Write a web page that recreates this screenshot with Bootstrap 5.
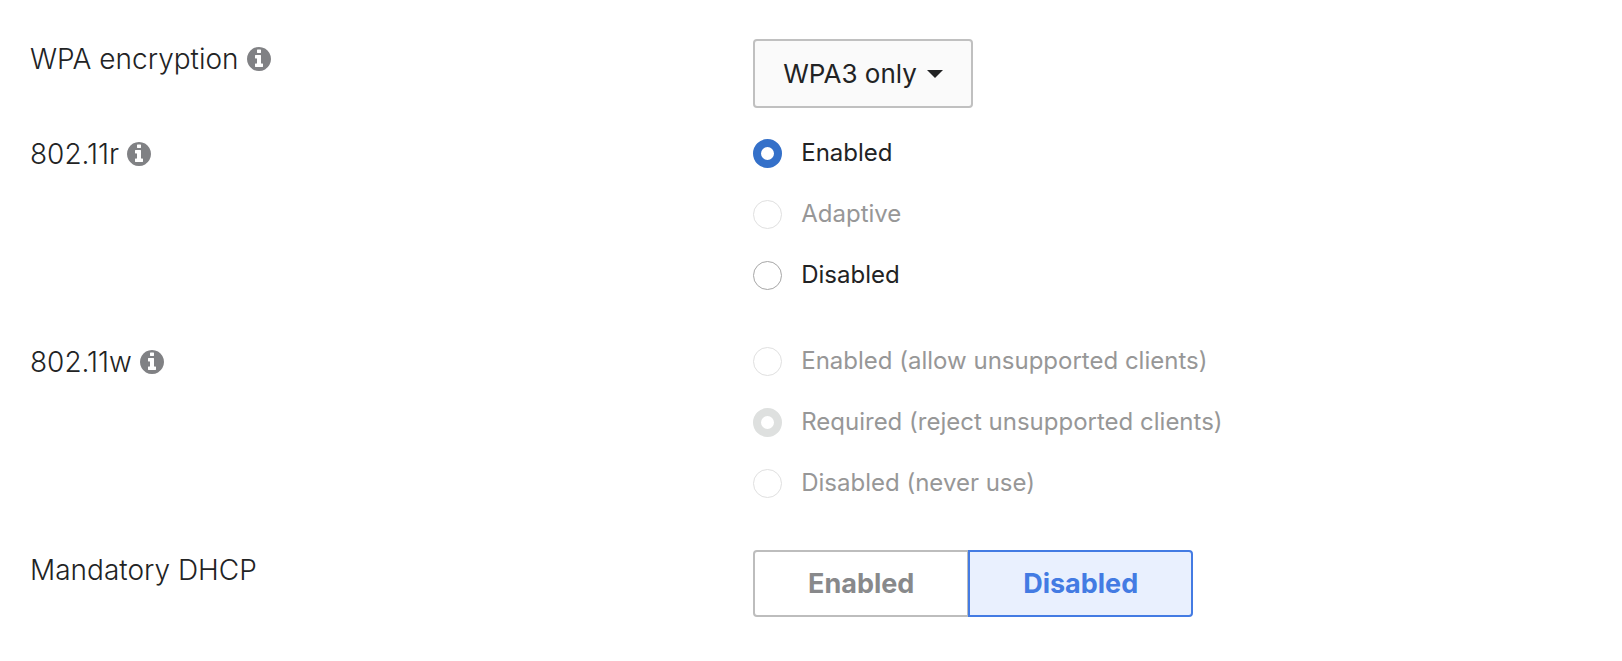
<!DOCTYPE html>
<html lang="en">
<head>
<meta charset="utf-8">
<meta name="viewport" content="width=device-width, initial-scale=1">
<title>Wireless settings</title>
<link href="https://cdn.jsdelivr.net/npm/bootstrap@5.3.0/dist/css/bootstrap.min.css" rel="stylesheet">
<style>
  body { font-family: Inter, "Liberation Sans", sans-serif; color: #222324; background: #fff; }
  .settings { padding: 39px 30px; }
  .setting { display: grid; grid-template-columns: 46.3% 1fr; margin-bottom: 48px; }
  .setting-tight { margin-bottom: 26px; }
  .setting-name { font-size: 28px; font-weight: 300; line-height: 40px; }
  .info { width: 24px; height: 24px; color: #808184; line-height: 1; }
  .info svg { display: block; width: 24px; height: 24px; fill: currentColor; }
  .picker {
    height: 69px; padding: 0 54px 0 28px; border: 2px solid #c0c0c0; border-radius: 4px;
    font-size: 26px; color: #222324; background-color: #fafafa;
    background-image: url("data:image/svg+xml,%3Csvg xmlns='http://www.w3.org/2000/svg' viewBox='0 0 16 8'%3E%3Cpath fill='%23222324' d='M0 0h16L8 8z'/%3E%3C/svg%3E");
    background-size: 16px 8px; background-position: right 28px center;
  }
  .options { gap: 23px; }
  .option { height: 38px; gap: 19px; font-size: 24px; line-height: 38px; }
  .option .form-check-input { width: 29px; height: 29px; margin: 0; border: 1px solid #a6a6a6; background-color: #fff; flex: none; }
  .option .form-check-input:checked { border: 8px solid #3470c9; background: #fff; }
  .option .form-check-input:disabled { opacity: 1; border-color: #e0e0e0; }
  .option .form-check-input:disabled:checked { border-color: #dee0df; }
  .option .form-check-input:disabled ~ .form-check-label { opacity: 1; color: #979797; }
  .toggle { width: 440px; height: 67px; }
  .toggle .btn {
    --bs-btn-color: #88898b; --bs-btn-border-color: #bdbdbd; --bs-btn-border-width: 2px; --bs-btn-border-radius: 4px;
    --bs-btn-active-color: #437be3; --bs-btn-active-bg: #e9f0fe; --bs-btn-active-border-color: #437be3;
    font-size: 27px; font-weight: 700; line-height: 63px; padding: 0;
  }
  .toggle .btn:first-child { flex: 0 0 216px; }
  .toggle .btn:last-child { margin-left: -2px; }
</style>
</head>
<body>
<svg class="d-none" xmlns="http://www.w3.org/2000/svg">
  <symbol id="info-circle" viewBox="0 128 1536 1536">
    <path d="M1024 1376v-160q0-14-9-23t-23-9h-96v-512q0-14-9-23t-23-9h-320q-14 0-23 9t-9 23v160q0 14 9 23t23 9h96v320h-96q-14 0-23 9t-9 23v160q0 14 9 23t23 9h448q14 0 23-9t9-23zm-128-896v-160q0-14-9-23t-23-9h-192q-14 0-23 9t-9 23v160q0 14 9 23t23 9h192q14 0 23-9t9-23zm640 416q0 209-103 385.500t-279.500 279.500-385.500 103-385.500-103-279.500-279.500-103-385.500 103-385.500 279.500-279.500 385.500-103 385.500 103 279.500 279.500 103 385.500z"/>
  </symbol>
</svg>
<main class="container-fluid settings">
  <div class="setting setting-tight">
    <div class="d-flex align-items-start gap-2">
      <label class="setting-name" for="wpa">WPA encryption</label>
      <button type="button" class="info btn p-0 border-0 mt-2" aria-label="About WPA encryption"><svg><use href="#info-circle"/></svg></button>
    </div>
    <div><select class="form-select w-auto picker" id="wpa"><option>WPA3 only</option></select></div>
  </div>

  <div class="setting" role="radiogroup" aria-labelledby="name-r">
    <div class="d-flex align-items-start gap-2">
      <span class="setting-name" id="name-r">802.11r</span>
      <button type="button" class="info btn p-0 border-0 mt-2" aria-label="About 802.11r"><svg><use href="#info-circle"/></svg></button>
    </div>
    <div class="d-flex flex-column options">
      <div class="d-flex align-items-center option">
        <input class="form-check-input" type="radio" name="r" id="r-on" checked><label class="form-check-label" for="r-on">Enabled</label>
      </div>
      <div class="d-flex align-items-center option">
        <input class="form-check-input" type="radio" name="r" id="r-adaptive" disabled><label class="form-check-label" for="r-adaptive">Adaptive</label>
      </div>
      <div class="d-flex align-items-center option">
        <input class="form-check-input" type="radio" name="r" id="r-off"><label class="form-check-label" for="r-off">Disabled</label>
      </div>
    </div>
  </div>

  <div class="setting" role="radiogroup" aria-labelledby="name-w">
    <div class="d-flex align-items-start gap-2">
      <span class="setting-name" id="name-w">802.11w</span>
      <button type="button" class="info btn p-0 border-0 mt-2" aria-label="About 802.11w"><svg><use href="#info-circle"/></svg></button>
    </div>
    <div class="d-flex flex-column options">
      <div class="d-flex align-items-center option">
        <input class="form-check-input" type="radio" name="w" id="w-on" disabled><label class="form-check-label" for="w-on">Enabled (allow unsupported clients)</label>
      </div>
      <div class="d-flex align-items-center option">
        <input class="form-check-input" type="radio" name="w" id="w-req" disabled checked><label class="form-check-label" for="w-req">Required (reject unsupported clients)</label>
      </div>
      <div class="d-flex align-items-center option">
        <input class="form-check-input" type="radio" name="w" id="w-off" disabled><label class="form-check-label" for="w-off">Disabled (never use)</label>
      </div>
    </div>
  </div>

  <div class="setting mb-0">
    <span class="setting-name" id="name-dhcp">Mandatory DHCP</span>
    <div>
      <div class="btn-group toggle" role="group" aria-labelledby="name-dhcp">
        <button type="button" class="btn" aria-pressed="false">Enabled</button>
        <button type="button" class="btn active" aria-pressed="true">Disabled</button>
      </div>
    </div>
  </div>
</main>
<script src="https://cdn.jsdelivr.net/npm/bootstrap@5.3.0/dist/js/bootstrap.bundle.min.js"></script>
</body>
</html>
